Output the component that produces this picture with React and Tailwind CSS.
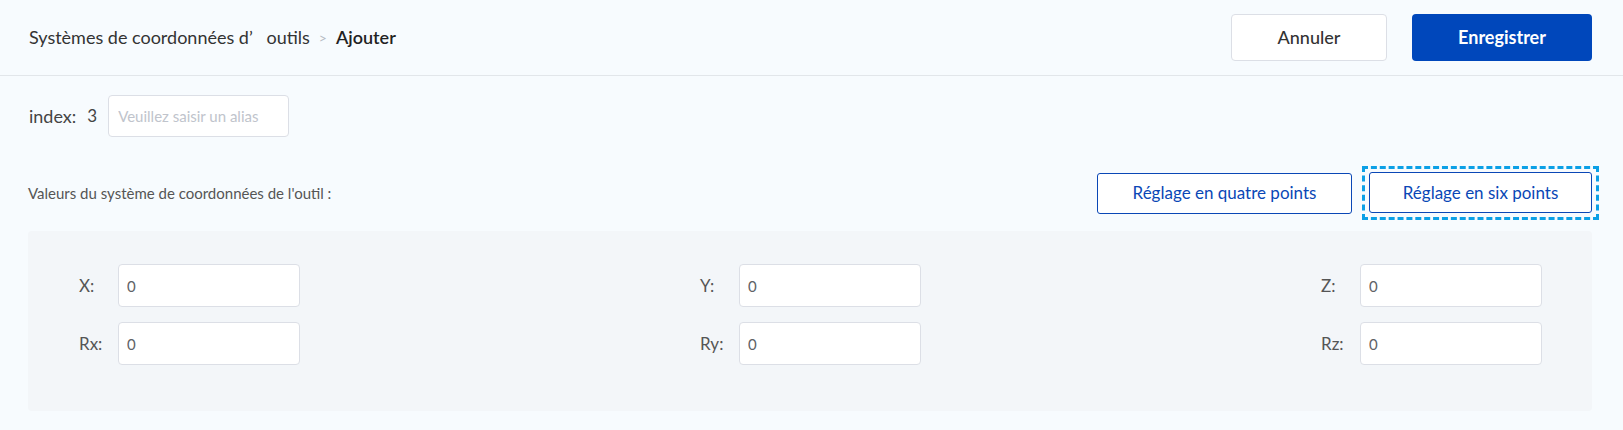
import React from 'react';

const fields = [
  [
    { label: 'X:', value: '0' },
    { label: 'Rx:', value: '0' }
  ],
  [
    { label: 'Y:', value: '0' },
    { label: 'Ry:', value: '0' }
  ],
  [
    { label: 'Z:', value: '0' },
    { label: 'Rz:', value: '0' }
  ]
];

const App = () => {
  return (
    <div
      className="min-h-[430px] bg-[#f7fbfe] text-[#333]"
      style={{ fontFamily: 'Lato, "Noto Sans", sans-serif' }}
    >
      {/* Header */}
      <div className="flex h-[76px] items-center justify-between border-b border-[#e2e6ea] pl-[29px] pr-[31px]">
        <div className="flex items-center text-[18px]">
          <span className="text-[#333]">Systèmes de coordonnées d’&nbsp;&nbsp;&nbsp;outils</span>
          <span className="mx-[9px] text-[14px] text-[#b8bcc4]">&gt;</span>
          <span className="font-semibold text-[#222]">Ajouter</span>
        </div>
        <div className="flex items-center gap-[25px]">
          <button className="h-[47px] w-[156px] rounded-[4px] border border-[#dcdfe6] bg-white text-[18px] font-medium text-[#333]">
            Annuler
          </button>
          <button className="h-[47px] w-[180px] rounded-[4px] bg-[#0047bb] text-[18px] font-bold text-white">
            Enregistrer
          </button>
        </div>
      </div>

      {/* Index row */}
      <div className="flex items-center pl-[29px] pt-[19px]">
        <span className="text-[18px] text-[#444]">index:</span>
        <span className="ml-[11px] text-[17px] text-[#444]">3</span>
        <input
          className="ml-[11px] h-[42px] w-[181px] rounded-[4px] border border-[#dcdfe6] bg-white px-[9px] text-[15px] outline-none placeholder:text-[#c0c4cc]"
          placeholder="Veuillez saisir un alias"
        />
      </div>

      {/* Values label + buttons */}
      <div className="mt-[29px] flex items-center justify-between pl-[28px] pr-[24px]">
        <span className="text-[15px] text-[#555]">Valeurs du système de coordonnées de l'outil :</span>
        <div className="flex items-center">
          <button className="h-[41px] w-[255px] rounded-[3px] border border-[#0a47b6] bg-white text-[17px] text-[#0a47b6]">
            Réglage en quatre points
          </button>
          <div className="ml-[10px] border-[3px] border-dashed border-[#0ca0e6] px-[4px] pt-[3px] pb-[4px]">
            <button className="block h-[41px] w-[223px] rounded-[3px] border border-[#0a47b6] bg-white text-[17px] text-[#0a47b6]">
              Réglage en six points
            </button>
          </div>
        </div>
      </div>

      {/* Coordinates panel */}
      <div className="ml-[28px] mr-[31px] mt-[11px] flex justify-between rounded-[4px] bg-[#f3f6f9] pl-[51px] pr-[50px] pt-[33px] pb-[46px]">
        {fields.map((col, ci) => (
          <div key={ci} className="flex flex-col gap-[15px]">
            {col.map((f) => (
              <div key={f.label} className="flex items-center">
                <span className="w-[39px] text-[17px] text-[#555]">{f.label}</span>
                <input
                  className="h-[43px] w-[182px] rounded-[4px] border border-[#dcdfe6] bg-white px-[8px] text-[15px] text-[#606266] outline-none"
                  defaultValue={f.value}
                />
              </div>
            ))}
          </div>
        ))}
      </div>
    </div>
  );
};

export default App;
